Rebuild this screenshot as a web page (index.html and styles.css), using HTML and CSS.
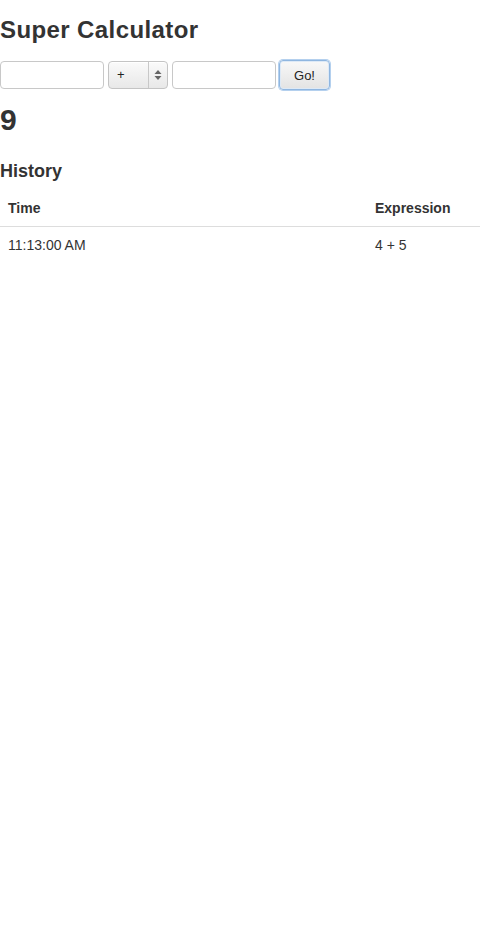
FILE: index.html
```html
<!DOCTYPE html>
<html>
<head>
<meta charset="utf-8">
<link rel="stylesheet" href="styles.css">
</head>
<body>
<h1 class="title">Super Calculator</h1>
<form class="calc">
  <input class="num" type="text">
  <div class="select"><span class="op">+</span><span class="arrows"><svg width="8" height="12" viewBox="0 0 8 12"><path d="M4 1 L7.5 5 H0.5 Z" fill="#666"/><path d="M4 11 L7.5 7 H0.5 Z" fill="#666"/></svg></span></div>
  <input class="num" type="text">
  <button class="go" type="button">Go!</button>
</form>
<h2 class="result">9</h2>
<h4 class="history">History</h4>
<table class="table">
  <thead>
    <tr><th class="col-time">Time</th><th>Expression</th></tr>
  </thead>
  <tbody>
    <tr><td>11:13:00 AM</td><td>4 + 5</td></tr>
  </tbody>
</table>
</body>
</html>
```
FILE: styles.css
```css
html, body {
  margin: 0;
  padding: 0;
  background: #fff;
}
body {
  font-family: "Liberation Sans", Arial, sans-serif;
  font-size: 14px;
  line-height: 1.428;
  color: #333;
}
.title {
  font-size: 24px;
  font-weight: bold;
  line-height: 26px;
  letter-spacing: 0.4px;
  margin: 17px 0 0 0;
}
.calc {
  display: flex;
  align-items: center;
  gap: 4px;
  margin-top: 17px;
  height: 30px;
}
.num {
  box-sizing: border-box;
  width: 104px;
  height: 28px;
  border: 1px solid #c8c8c8;
  border-radius: 4px;
  margin: 0;
  padding: 0 6px;
  font-family: inherit;
  font-size: 14px;
  background: #fff;
}
.select {
  box-sizing: border-box;
  width: 60px;
  height: 28px;
  border: 1px solid #c4c4c4;
  border-radius: 4px;
  display: flex;
  background: linear-gradient(#fafafa, #e8e8e8);
  box-shadow: inset 0 1px 0 #fff;
  font-size: 13px;
  color: #222;
}
.op {
  flex: 1;
  display: flex;
  align-items: center;
  padding-left: 8px;
  border-right: 1px solid #c8c8c8;
}
.arrows {
  width: 18px;
  display: flex;
  align-items: center;
  justify-content: center;
}
.go {
  box-sizing: border-box;
  width: 51px;
  height: 30px;
  margin: 0 0 0 -1px;
  border: 1px solid #8fb6e0;
  border-radius: 4px;
  box-shadow: 0 0 0 1px #b4d0ee, inset 0 0 0 1px #dde9f6;
  background: linear-gradient(#f8f8f8, #e3e3e3);
  font-family: inherit;
  font-size: 13px;
  color: #222;
  padding: 0;
}
.result {
  font-size: 30px;
  font-weight: bold;
  line-height: 33px;
  margin: 13px 0 0 0;
}
.history {
  font-size: 18px;
  font-weight: bold;
  line-height: 20px;
  margin: 25px 0 0 0;
}
.table {
  width: 100%;
  border-collapse: collapse;
  border-spacing: 0;
  margin-top: 9px;
}
.table th, .table td {
  text-align: left;
  padding: 8px;
  line-height: 20px;
  vertical-align: top;
}
.table th {
  font-weight: bold;
  border-bottom: 1px solid #ddd;
}
.col-time {
  width: 351px;
}
```
